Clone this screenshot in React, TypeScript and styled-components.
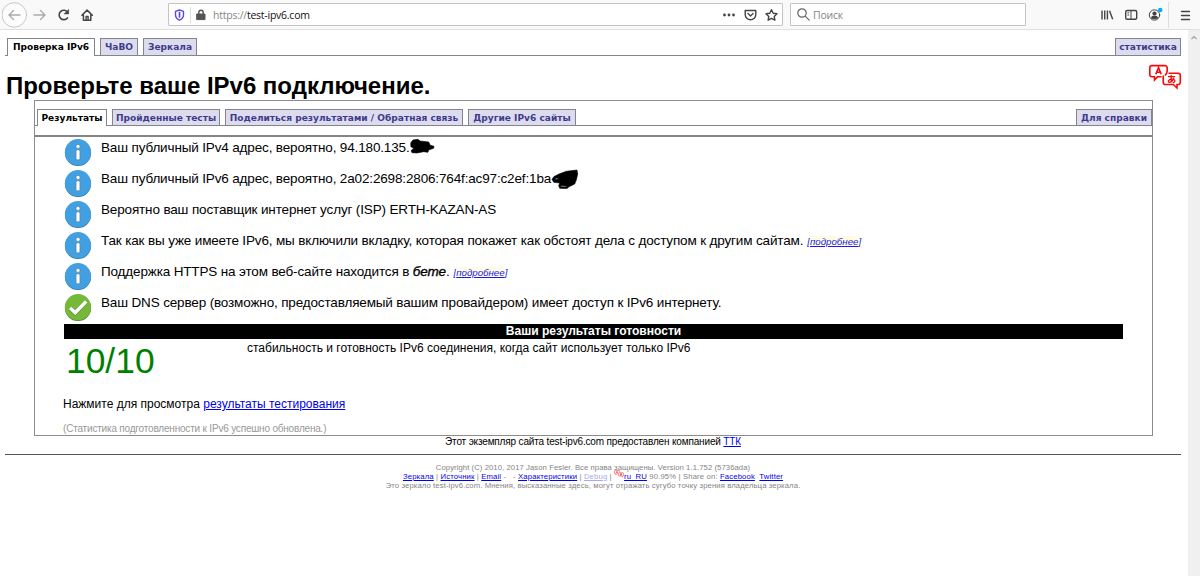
import React from "react";
import styled, { createGlobalStyle } from "styled-components";

const GlobalStyle = createGlobalStyle`
  * { box-sizing: border-box; }
  body { margin: 0; background: #fff; overflow: hidden; font-family: "Liberation Sans", Arial, sans-serif; color: #000; }
  svg { display: block; flex: none; }
`;

const Window = styled.div`
  width: 1200px;
  height: 576px;
  display: flex;
  flex-direction: column;
`;

const Toolbar = styled.header`
  height: 30px;
  flex: none;
  display: flex;
  align-items: center;
  background: #f9f9fa;
  border-bottom: 1px solid #e0e0e1;
  font-family: "Open Sans", "Noto Sans", sans-serif;
  font-size: 10.5px;
  color: #444;
  padding: 0 6px 0 2px;
`;

const Gap = styled.span<{ $w: number }>`
  width: ${(p) => p.$w}px;
  flex: none;
`;

const Field = styled.div<{ $w: number }>`
  width: ${(p) => p.$w}px;
  height: 23px;
  flex: none;
  display: flex;
  align-items: center;
  background: #fff;
  border: 1px solid #c4c4c5;
  border-radius: 1px;
  white-space: pre;
`;

const FieldText = styled.span<{ $w?: number; $ls?: number }>`
  width: ${(p) => (p.$w ? `${p.$w}px` : "auto")};
  letter-spacing: ${(p) => p.$ls ?? 0}px;
  padding-top: 1px;
  color: #858585;
  b { font-weight: 400; color: #111; }
`;

const Divider = styled.span<{ $h: number }>`
  width: 1px;
  height: ${(p) => p.$h}px;
  background: #dededf;
  flex: none;
`;

const Viewport = styled.div`
  flex: 1;
  display: flex;
`;

const Page = styled.main`
  flex: 1;
  display: flex;
  flex-direction: column;
  padding: 8px 7px 0 5px;
`;

const Scrollbar = styled.aside`
  width: 12px;
  background: #f0f0f0;
  display: flex;
  justify-content: center;
  padding-top: 4px;
`;

const TabBar = styled.nav<{ $h: number }>`
  height: ${(p) => p.$h}px;
  flex: none;
  display: flex;
  gap: 5px;
  padding-left: 2px;
  border-bottom: 1px solid #84848f;
`;

const Tab = styled.a<{ $w: number; $active?: boolean; $right?: boolean }>`
  width: ${(p) => p.$w}px;
  height: ${(p) => (p.$active ? "calc(100% + 1px)" : "100%")};
  display: flex;
  align-items: center;
  justify-content: center;
  flex: none;
  padding-bottom: ${(p) => (p.$active ? 1 : 0)}px;
  margin-left: ${(p) => (p.$right ? "auto" : 0)};
  border: 1px solid #84848f;
  border-bottom: 0;
  background: ${(p) => (p.$active ? "#fff" : "#dddcee")};
  color: ${(p) => (p.$active ? "#000" : "#3f3b8c")};
  font: bold 9.05px "DejaVu Sans", Verdana, sans-serif;
  white-space: nowrap;
`;

const TitleRow = styled.div`
  height: 44px;
  flex: none;
  display: flex;
  justify-content: space-between;
  padding: 8px 0 0 1px;
  svg { margin-right: -1px; }
`;

const Title = styled.h1`
  margin: 0;
  font-size: 24px;
  line-height: 28px;
  padding-top: 8px;
  letter-spacing: -0.02px;
  white-space: nowrap;
`;

const Panel = styled.section`
  width: 1119px;
  height: 336px;
  flex: none;
  margin-left: 29px;
  border: 1px solid #8c8c8c;
  padding-top: 8px;
`;

const Results = styled.div`
  margin-top: 9px;
  border-top: 2px solid #858585;
  padding: 0 29px;
`;

const ResultRow = styled.div`
  height: 31px;
  display: flex;
  gap: 9px;
  padding-top: 1px;
`;

const ResultText = styled.div`
  display: flex;
  align-items: center;
  height: 18px;
  font-size: 13.5px;
  letter-spacing: -0.15px;
  white-space: pre;
  i { -webkit-text-stroke: 0.35px #000; }
`;

const More = styled.a`
  margin-left: 4px;
  padding-top: 2px;
  font-size: 9.7px;
  font-style: italic;
  color: #1a1aee;
  letter-spacing: 0;
  span { text-decoration: underline; background: #fffbe0; }
`;

const Banner = styled.div`
  height: 15px;
  margin-top: 1px;
  background: #000;
  color: #fff;
  font-weight: bold;
  font-size: 12.05px;
  line-height: 15px;
  text-align: center;
`;

const ScoreRow = styled.div`
  display: flex;
  height: 50px;
  padding-left: 2px;
`;

const Score = styled.div`
  width: 181px;
  font-size: 35.4px;
  line-height: 45px;
  color: #008000;
`;

const ScoreText = styled.div`
  font-size: 12px;
  line-height: 18px;
  white-space: nowrap;
`;

const Line = styled.p<{ $h: number; $size: number; $color?: string; $ls?: number }>`
  margin: 0 0 0 -1px;
  height: ${(p) => p.$h}px;
  line-height: ${(p) => p.$h}px;
  font-size: ${(p) => p.$size}px;
  letter-spacing: ${(p) => p.$ls ?? 0}px;
  color: ${(p) => p.$color ?? "#000"};
  white-space: pre;
`;

const Link = styled.a<{ $faded?: boolean }>`
  color: ${(p) => (p.$faded ? "#a9a9f0" : "#0000ee")};
  text-decoration: underline;
`;

const Sponsor = styled.div`
  height: 19px;
  width: 100%;
  flex: none;
  border-bottom: 1px solid #555;
  font-size: 10px;
  letter-spacing: -0.16px;
  line-height: 12px;
  text-align: center;
`;

const Footer = styled.footer`
  padding-top: 8px;
  display: flex;
  flex-direction: column;
  align-items: center;
  font-size: 7.7px;
  color: #858585;
`;

const FooterLine = styled.div<{ $ls?: number }>`
  height: 9px;
  line-height: 9px;
  white-space: pre;
  letter-spacing: ${(p) => p.$ls ?? 0}px;
  svg { display: inline-block; vertical-align: top; margin: -2px 0 -6px; }
`;

const InfoIcon = () => (
  <svg width="28" height="28" viewBox="0 0 28 28">
    <circle cx="14" cy="14.9" r="13.1" fill="#2b79ad" />
    <circle cx="14" cy="14.2" r="13.1" fill="#43a0e0" />
    <circle cx="14" cy="8.4" r="2" fill="#fff" stroke="#4a7190" strokeWidth=".5" />
    <rect x="12.1" y="11.8" width="3.8" height="10" rx="1.6" fill="#fff" stroke="#4a7190" strokeWidth=".5" />
  </svg>
);

const OkIcon = () => (
  <svg width="28" height="28" viewBox="0 0 28 28">
    <circle cx="14" cy="14.9" r="13.1" fill="#4b8425" />
    <circle cx="14" cy="14.2" r="13.1" fill="#76b838" />
    <path d="M6 15.5l5.200 4.800L22.200 9" fill="none" stroke="#4c7c28" strokeWidth="3.900" />
    <path d="M6 15l5.200 4.800L22.200 8.500" fill="none" stroke="#fff" strokeWidth="3.400" />
  </svg>
);

const LanguageIcon = ({ size = 34 }: { size?: number }) => (
  <svg width={size} height={(size * 26) / 34} viewBox="0 0 34 26" fill="none" stroke="#f80808" strokeWidth="1.600">
    <path d="M13.500 12.800H9.500L6.500 16v-3.200H4a2.200 2.200 0 0 1-2.200-2.200V3.800A2.200 2.200 0 0 1 4 1.600h13a2.200 2.200 0 0 1 2.200 2.200v3.400" />
    <path d="M20.500 9.200H30a2.300 2.300 0 0 1 2.300 2.300v6.700a2.300 2.300 0 0 1-2.300 2.300h-1V24l-3.700-3.500h-7.800a2.300 2.300 0 0 1-2.300-2.300v-6.700M19.200 7c0 2-.8 3.200-2.400 4.500" />
    <path d="M7.800 10.200l2.700-6.500 2.700 6.500M8.800 8.200h3.400" strokeWidth="1.600" />
    <path d="M20 12.600h7.200M23.200 11c-.3 3 0 5.200.6 7.200M26 13.800c-1 3-3 4.500-4.700 4.500-2 0-1-3 2.200-3.200 4-.3 4.500 3 1.200 3.600" strokeWidth="1.300" />
  </svg>
);

const Scribble = ({ d, w }: { d: string; w: number }) => (
  <svg width={w} height="22" viewBox={`0 0 ${w} 22`}>
    <path d={d} fill="#000" fillRule="evenodd" stroke="#000" strokeWidth=".6" strokeLinejoin="round" />
  </svg>
);

const NavIcon = ({ children, w = 16, color = "#444" }: { children: React.ReactNode; w?: number; color?: string }) => (
  <svg width={w} height="28" viewBox={`0 0 ${w} 28`} fill="none" stroke={color} strokeWidth="1.4" strokeLinecap="round" strokeLinejoin="round">
    {children}
  </svg>
);

const BrowserBar = () => (
  <Toolbar>
    <NavIcon w={27} color="#aaa">
      <circle cx="12.300" cy="13.900" r="12.300" fill="#fcfcfc" stroke="#c8c8c8" strokeWidth="1" />
      <path d="M18 14H7.500M11.500 9.500L7 14l4.500 4.500" />
    </NavIcon>
    <Gap $w={4} />
    <NavIcon color="#aaa"><path d="M1 14h10M7.500 9.500L12 14l-4.500 4.500" /></NavIcon>
    <Gap $w={9} />
    <NavIcon>
      <path d="M9.500 16.900A4.700 4.700 0 1 1 9.600 11.100" strokeWidth="1.600" />
      <path d="M10.600 8.700v4.200H6.400z" fill="#444" strokeWidth=".6" />
    </NavIcon>
    <Gap $w={7} />
    <NavIcon>
      <path d="M.9 14.300l5.200-5.200 5.200 5.200M2.400 14v5.300h7.400V14" strokeWidth="1.500" />
      <path d="M5.100 19v-3.500h2V19" />
    </NavIcon>
    <Gap $w={71} />
    <Field $w={615}>
      <Gap $w={4} />
      <NavIcon w={14} color="#5a4be0">
        <path d="M2.500 10.300L6.500 9l4 1.300v3.500c0 2.600-1.600 4.400-4 5.400-2.400-1-4-2.800-4-5.400z" />
        <path d="M6.500 11.500v4.500" strokeWidth="1.700" />
      </NavIcon>
      <Gap $w={3} />
      <Divider $h={16} />
      <Gap $w={5} />
      <NavIcon w={12}>
        <rect x="1" y="13" width="8" height="5.600" fill="#555" stroke="#555" strokeWidth="1" />
        <path d="M2.800 13v-1.600a2.200 2.200 0 0 1 4.400 0V13" stroke="#555" />
      </NavIcon>
      <Gap $w={5} />
      <FieldText $w={97} $ls={-0.24}>https://<b>test-ipv6.com</b></FieldText>
      <Gap $w={412} />
      <NavIcon w={14}>
        <g fill="#444" stroke="none"><circle cx="2.500" cy="14" r="1.400" /><circle cx="7" cy="14" r="1.400" /><circle cx="11.500" cy="14" r="1.400" /></g>
      </NavIcon>
      <Gap $w={7} />
      <NavIcon>
        <path d="M2.200 9.500h10.600v4a5.300 5.300 0 0 1-10.600 0z" />
        <path d="M5 12.500l2.500 2.400 2.500-2.400" />
      </NavIcon>
      <Gap $w={5} />
      <NavIcon>
        <path d="M7.500 8.700l1.700 3.500 3.800.5-2.800 2.700.7 3.800-3.400-1.800-3.400 1.800.7-3.800L2 12.700l3.800-.5z" />
      </NavIcon>
    </Field>
    <Gap $w={7} />
    <Field $w={236}>
      <Gap $w={5} />
      <NavIcon w={17} color="#666">
        <circle cx="6" cy="12" r="4.200" strokeWidth="1.200" />
        <path d="M9.200 15.200l4 4" strokeWidth="1.200" />
      </NavIcon>
      <FieldText $ls={-0.25}>Поиск</FieldText>
    </Field>
    <Gap $w={74} />
    <NavIcon>
      <path d="M2 9.500v9M4.700 9.500v9M7.400 9.500v9M9.500 9.700l3.200 8.600" strokeLinecap="butt" />
    </NavIcon>
    <Gap $w={8} />
    <NavIcon>
      <rect x="1.700" y="9.500" width="11" height="8.800" rx="1.500" />
      <path d="M7 9.500v8.500M3.800 11.800h1M3.800 14h1" strokeWidth="1" />
    </NavIcon>
    <Gap $w={8} />
    <NavIcon>
      <circle cx="6.500" cy="14" r="5.200" strokeWidth="1" />
      <circle cx="6.500" cy="12.500" r="2.100" fill="#444" stroke="none" />
      <path d="M3 17c.5-3.200 6.500-3.200 7 0-1.500 1.600-5.500 1.600-7 0z" fill="#444" stroke="none" />
      <circle cx="12.200" cy="9" r="2.300" fill="#00b0f4" stroke="none" />
    </NavIcon>
    <Gap $w={4} />
    <Divider $h={26} />
    <Gap $w={10} />
    <NavIcon w={13}><path d="M2.500 10.500h8M2.500 14.500h8M2.500 18.500h8" /></NavIcon>
  </Toolbar>
);

export default function App() {
  return (
    <Window>
      <GlobalStyle />
      <BrowserBar />
      <Viewport>
        <Page>
          <TabBar $h={18}>
            <Tab $w={88} $active>Проверка IPv6</Tab>
            <Tab $w={38}>ЧаВО</Tab>
            <Tab $w={54}>Зеркала</Tab>
            <Tab $w={66} $right>статистика</Tab>
          </TabBar>
          <TitleRow>
            <Title>Проверьте ваше IPv6 подключение.</Title>
            <LanguageIcon />
          </TitleRow>
          <Panel>
            <TabBar $h={17}>
              <Tab $w={70} $active>Результаты</Tab>
              <Tab $w={108}>Пройденные тесты</Tab>
              <Tab $w={238}>Поделиться результатами / Обратная связь</Tab>
              <Tab $w={108}>Другие IPv6 сайты</Tab>
              <Tab $w={76} $right>Для справки</Tab>
            </TabBar>
            <Results>
              <ResultRow>
                <InfoIcon />
                <ResultText>
                  Ваш публичный IPv4 адрес, вероятно, 94.180.135.
                  <Scribble w={26} d="M.8 6.700L3 4l4.700-.7L10.300 5l8.400 1 1.600 3.300 3.700 1-.4 2-5 1.700-.6 2.300-4.300-.6-6.700 1.300-5-.3-1-2 2.700-2.400-2.900-1.600z" />
                </ResultText>
              </ResultRow>
              <ResultRow>
                <InfoIcon />
                <ResultText>
                  Ваш публичный IPv6 адрес, вероятно, 2a02:2698:2806:764f:ac97:c2ef:1ba
                  <Scribble w={28} d="M1 12.300l2-2.700 5-2.600 7.300-2.700L26 3l.7 4-1.400 6-1.600 4-5.700 2.700-2 1.900-7.300-.3-1-2.600 1-2.700-6-.7zM3.500 12.200l2.500.2 1.500-1.400-2 .2zM9.500 19.700l5.500.2.500-.8-5.500-.4z" />
                </ResultText>
              </ResultRow>
              <ResultRow>
                <InfoIcon />
                <ResultText>Вероятно ваш поставщик интернет услуг (ISP) ERTH-KAZAN-AS</ResultText>
              </ResultRow>
              <ResultRow>
                <InfoIcon />
                <ResultText>Так как вы уже имеете IPv6, мы включили вкладку, которая покажет как обстоят дела с доступом к другим сайтам.<More>[<span>подробнее</span>]</More></ResultText>
              </ResultRow>
              <ResultRow>
                <InfoIcon />
                <ResultText>Поддержка HTTPS на этом веб-сайте находится в <i>бете</i>.<More>[<span>подробнее</span>]</More></ResultText>
              </ResultRow>
              <ResultRow>
                <OkIcon />
                <ResultText>Ваш DNS сервер (возможно, предоставляемый вашим провайдером) имеет доступ к IPv6 интернету.</ResultText>
              </ResultRow>
              <Banner>Ваши результаты готовности</Banner>
              <ScoreRow>
                <Score>10/10</Score>
                <ScoreText>стабильность и готовность IPv6 соединения, когда сайт использует только IPv6</ScoreText>
              </ScoreRow>
              <Line $h={30} $size={12}>Нажмите для просмотра <Link>результаты тестирования</Link></Line>
              <Line $h={19} $size={10} $color="#999" $ls={-0.19}>(Статистика подготовленности к IPv6 успешно обновлена.)</Line>
            </Results>
          </Panel>
          <Sponsor>Этот экземпляр сайта test-ipv6.com предоставлен компанией <Link>ТТК</Link></Sponsor>
          <Footer>
            <FooterLine $ls={0.07}>Copyright (C) 2010, 2017 Jason Fesler. Все права защищены. Version 1.1.752 (5736ada)</FooterLine>
            <FooterLine $ls={0.15}>
              <Link>Зеркала</Link> | <Link>Источник</Link> | <Link>Email</Link> -   - <Link>Характеристики</Link> | <Link $faded>Debug</Link> | <LanguageIcon size={10} /><Link>ru_RU</Link> 90.95% | Share on: <Link>Facebook</Link>{"  "}<Link>Twitter</Link>
            </FooterLine>
            <FooterLine $ls={0.11}>Это зеркало test-ipv6.com. Мнения, высказанные здесь, могут отражать сугубо точку зрения владельца зеркала.</FooterLine>
          </Footer>
        </Page>
        <Scrollbar>
          <svg width="8" height="8" viewBox="0 0 8 8"><path d="M1.500 5L4 2.500 6.500 5" fill="none" stroke="#a0a0a0" strokeWidth="1.200" /></svg>
        </Scrollbar>
      </Viewport>
    </Window>
  );
}
